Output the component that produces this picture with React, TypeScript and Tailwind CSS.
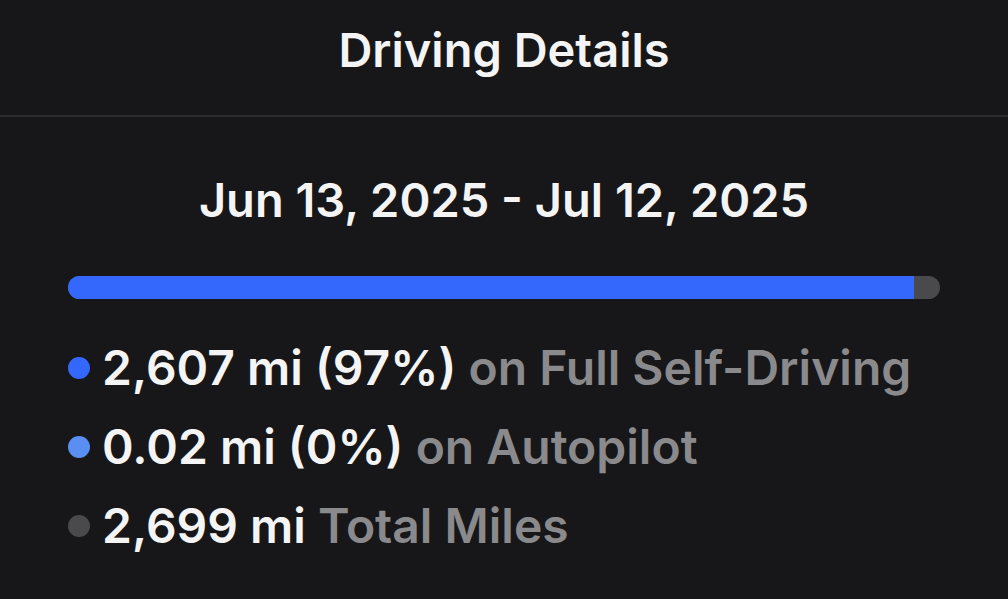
import React from "react";

const rows = [
  { dot: "bg-[#3467fb]", main: "2,607 mi (97%)", rest: "on Full Self-Driving" },
  { dot: "bg-[#5b8ef2]", main: "0.02 mi (0%)", rest: "on Autopilot" },
  { dot: "bg-[#4a4a4c]", main: "2,699 mi", rest: "Total Miles" },
];

export default function App() {
  return (
    <div
      className="w-[1008px] h-[599px] bg-[#171719] text-[#f4f4f5] overflow-hidden"
      style={{ fontFamily: "Inter, 'Noto Sans', sans-serif" }}
    >
      <div className="h-[117px] flex items-center justify-center border-b-2 border-[#2b2b2d]">
        <h1 className="text-[47px] font-semibold leading-none -mt-[16px]">Driving Details</h1>
      </div>
      <div className="px-[68px] flex flex-col">
        <div className="mt-[59px] text-center text-[47px] font-semibold leading-none">
          Jun 13, 2025 - Jul 12, 2025
        </div>
        <div className="mt-[53px] h-[23px] w-[872px] rounded-full bg-[#4a4a4c] flex overflow-hidden">
          <div className="h-full w-[846px] bg-[#3467fb]" />
        </div>
        <div className="mt-[45px] flex flex-col gap-[31px]">
          {rows.map((r) => (
            <div key={r.main} className="flex items-center gap-[12px] h-[48px]">
              <span className={`w-[22px] h-[22px] rounded-full shrink-0 ${r.dot}`} />
              <span className="text-[48px] font-semibold leading-none whitespace-nowrap">
                {r.main} <span className="text-[#8a8a8d]">{r.rest}</span>
              </span>
            </div>
          ))}
        </div>
      </div>
    </div>
  );
}
